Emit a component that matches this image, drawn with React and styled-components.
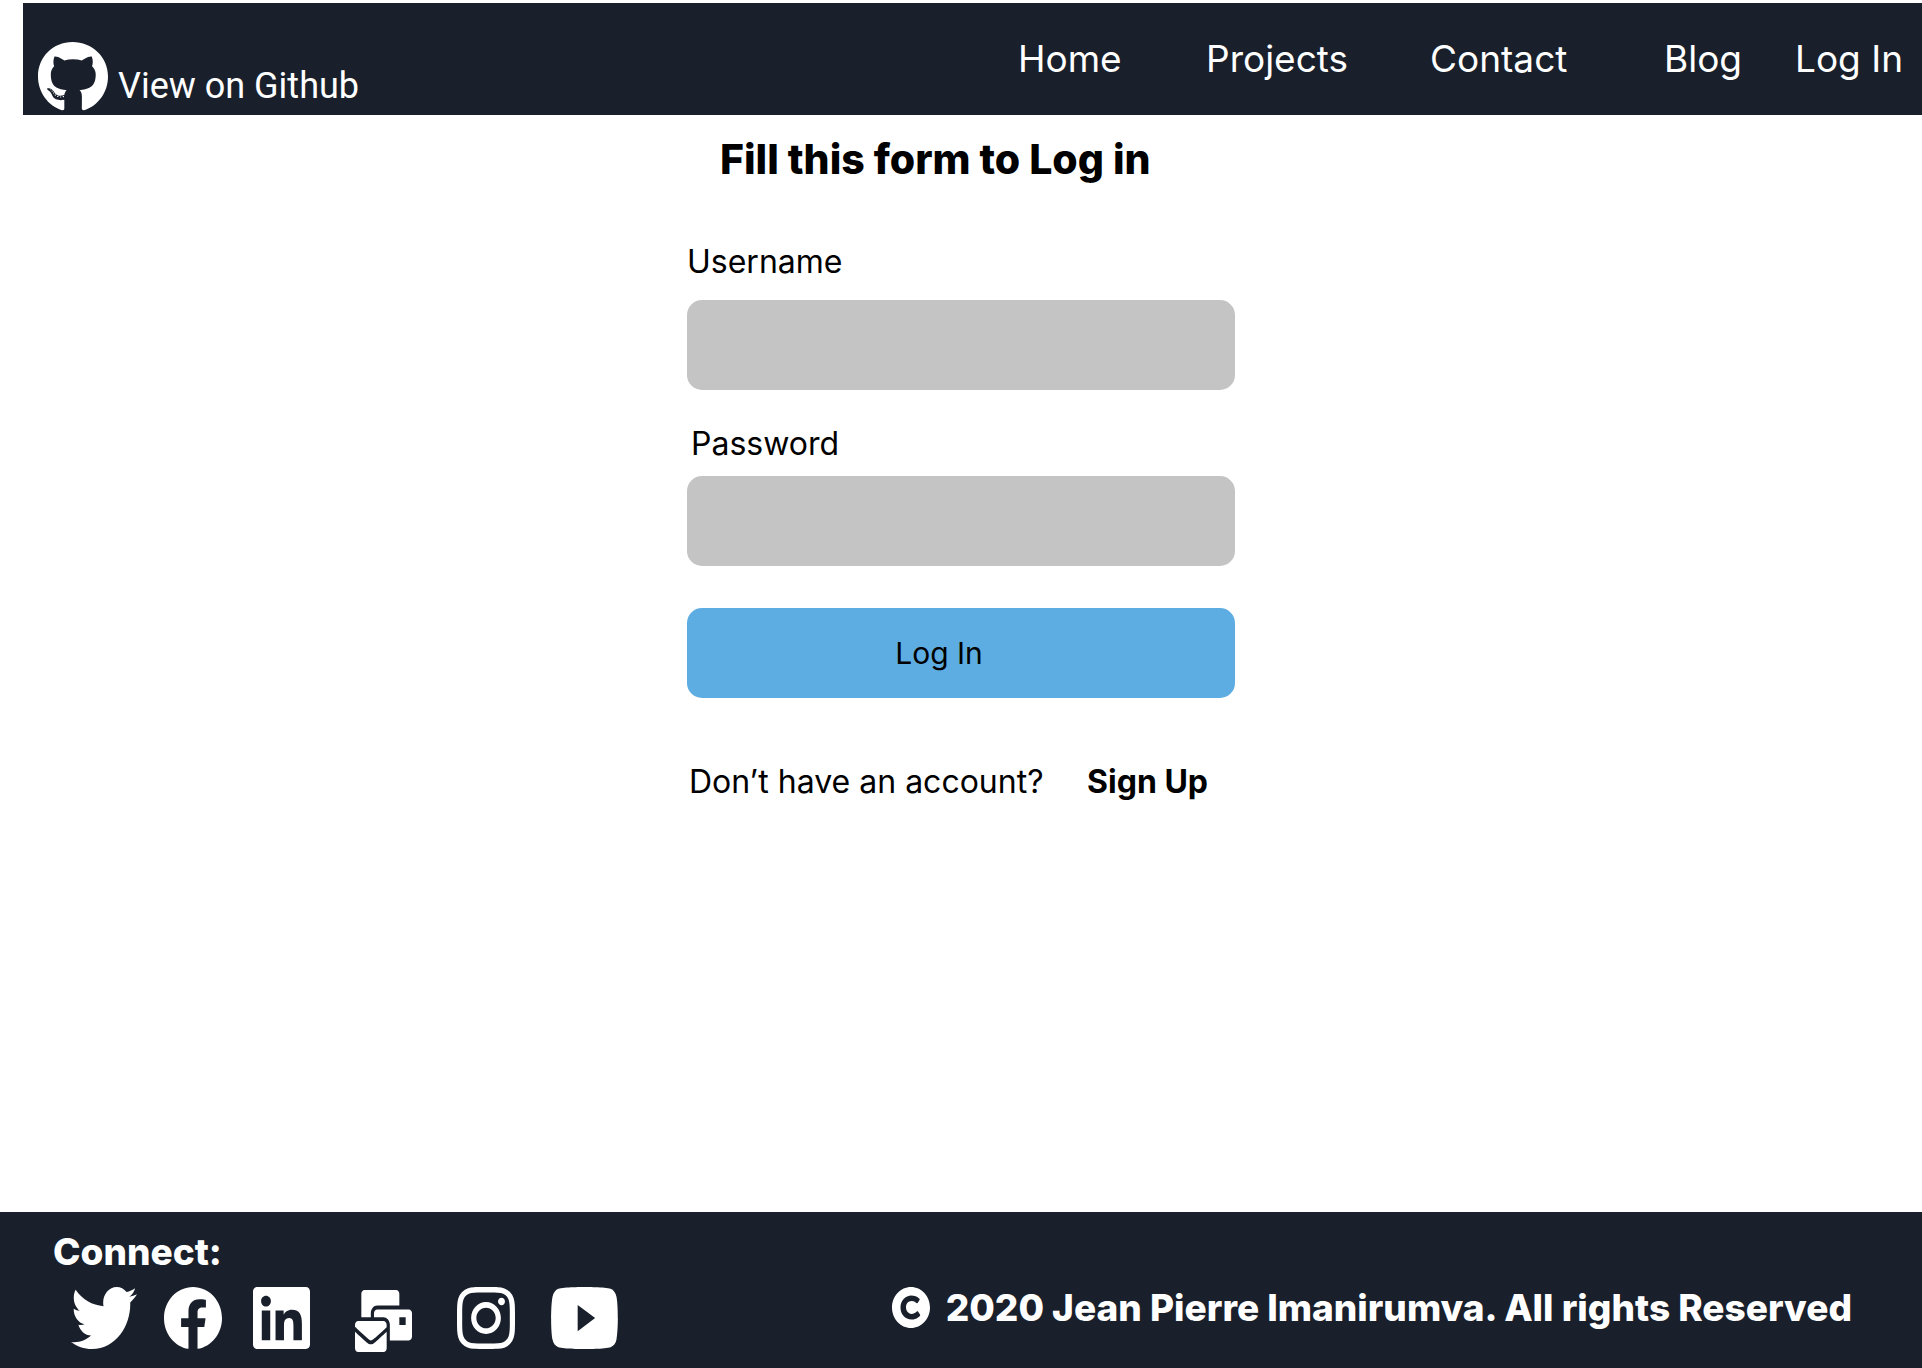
import React from "react";
import styled, { createGlobalStyle } from "styled-components";
import {
  FaCopyright,
  FaFacebook,
  FaGithub,
  FaInstagram,
  FaLinkedin,
  FaMailBulk,
  FaTwitter,
  FaYoutube,
} from "react-icons/fa";

const colors = {
  bar: "#19202b",
  field: "#c4c4c4",
  action: "#5dade2",
  text: "#000000",
  light: "#ffffff",
};

const GlobalStyle = createGlobalStyle`
  *, *::before, *::after { box-sizing: border-box; }
  body {
    margin: 0;
    background: ${colors.light};
    color: ${colors.text};
    font-family: Inter, "Liberation Sans", sans-serif;
  }
  a { color: inherit; text-decoration: none; }
`;

const Page = styled.div`
  display: flex;
  flex-direction: column;
  min-height: 100vh;
`;

const Header = styled.header`
  display: flex;
  justify-content: space-between;
  min-height: 112px;
  margin: 3px 0 0 23px;
  padding-left: 15px;
  background: ${colors.bar};
  color: ${colors.light};
`;

const GithubLink = styled.a`
  display: flex;
  align-items: flex-end;
  gap: 10px;
  padding-bottom: 3px;
  font-family: Roboto, "Liberation Sans", sans-serif;
  font-size: 36px;
  line-height: 52px;
  white-space: nowrap;
`;

const Nav = styled.nav`
  display: grid;
  grid-template-columns: 188px 224px 234px 131px 127px;
  align-items: center;
  font-size: 37px;
  line-height: 44px;
  white-space: nowrap;
`;

const Main = styled.main`
  flex: 1;
  display: flex;
  justify-content: center;
  padding: 20px 24px;
`;

const Form = styled.form`
  display: flex;
  flex-direction: column;
  width: 100%;
  max-width: 548px;
`;

const Title = styled.h1`
  margin: 0 0 59px;
  padding-left: 33px;
  font-size: 41px;
  font-weight: 800;
  line-height: 48px;
  white-space: nowrap;
`;

const Field = styled.div`
  display: flex;
  flex-direction: column;
  gap: ${({ $gap }) => $gap}px;
  margin-bottom: ${({ $after }) => $after}px;
`;

const Label = styled.label`
  padding-left: ${({ $inset }) => $inset || 0}px;
  font-size: 32px;
  line-height: 40px;
`;

const Input = styled.input`
  width: 100%;
  height: 90px;
  padding: 0 24px;
  border: 0;
  border-radius: 15px;
  background: ${colors.field};
  font: inherit;
  font-size: 30px;
`;

const Submit = styled.button`
  height: 90px;
  padding: 0 44px 0 0;
  border: 0;
  border-radius: 15px;
  background: ${colors.action};
  color: ${colors.text};
  font: inherit;
  font-size: 30px;
  cursor: pointer;
`;

const SignUpRow = styled.p`
  display: flex;
  justify-content: space-between;
  margin: 64px 0 0;
  padding: 0 27px 0 2px;
  font-size: 32px;
  line-height: 40px;
  white-space: nowrap;
`;

const SignUpLink = styled.a`
  font-weight: 700;
`;

const Footer = styled.footer`
  display: flex;
  justify-content: space-between;
  align-items: flex-end;
  padding: 18px 70px 16px 53px;
  background: ${colors.bar};
  color: ${colors.light};
`;

const ConnectTitle = styled.h2`
  margin: 0 0 13px;
  font-size: 37px;
  font-weight: 800;
  line-height: 44px;
`;

const SocialList = styled.ul`
  display: flex;
  align-items: flex-start;
  margin: 0;
  padding: 0;
  list-style: none;
`;

const SocialItem = styled.li`
  margin-left: ${({ $before }) => $before}px;
`;

const SocialLink = styled.a`
  display: block;
  svg { display: block; }
`;

const Copyright = styled.p`
  display: flex;
  align-items: center;
  gap: 16px;
  margin: 0 0 24px;
  font-size: 37px;
  font-weight: 800;
  line-height: 41px;
  white-space: nowrap;
`;

const links = ["Home", "Projects", "Contact", "Blog", "Log In"];

const socials = [
  { name: "Twitter", Icon: FaTwitter, box: "0 48 512 416", width: 66, height: 62, before: 18 },
  { name: "Facebook", Icon: FaFacebook, box: "8 8 496 494", width: 58, height: 62, before: 27 },
  { name: "LinkedIn", Icon: FaLinkedin, box: "0 32 448 448", width: 57, height: 62, before: 31 },
  { name: "Email", Icon: FaMailBulk, box: "0 -25 576 537", width: 57, height: 65, before: 45 },
  { name: "Instagram", Icon: FaInstagram, box: "0 32 448 448", width: 58, height: 62, before: 45 },
  { name: "YouTube", Icon: FaYoutube, box: "14 64 548 384", width: 67, height: 62, before: 36 },
];

export default function App() {
  return (
    <Page>
      <GlobalStyle />
      <Header>
        <GithubLink href="#github">
          <FaGithub viewBox="0 8 496 496" size={70} aria-hidden="true" />
          View on Github
        </GithubLink>
        <Nav aria-label="Main">
          {links.map((name) => (
            <a key={name} href={`#${name.toLowerCase().replace(" ", "-")}`}>
              {name}
            </a>
          ))}
        </Nav>
      </Header>
      <Main>
        <Form onSubmit={(event) => event.preventDefault()}>
          <Title>Fill this form to Log in</Title>
          <Field $gap={18} $after={34}>
            <Label htmlFor="username">Username</Label>
            <Input id="username" name="username" type="text" autoComplete="username" />
          </Field>
          <Field $gap={12} $after={42}>
            <Label htmlFor="password" $inset={4}>Password</Label>
            <Input id="password" name="password" type="password" autoComplete="current-password" />
          </Field>
          <Submit type="submit">Log In</Submit>
          <SignUpRow>
            <span>Don’t have an account?</span>
            <SignUpLink href="#sign-up">Sign Up</SignUpLink>
          </SignUpRow>
        </Form>
      </Main>
      <Footer>
        <section>
          <ConnectTitle>Connect:</ConnectTitle>
          <SocialList>
            {socials.map(({ name, Icon, box, width, height, before }) => (
              <SocialItem key={name} $before={before}>
                <SocialLink href={`#${name.toLowerCase()}`} aria-label={name}>
                  <Icon viewBox={box} preserveAspectRatio="none" style={{ width, height }} />
                </SocialLink>
              </SocialItem>
            ))}
          </SocialList>
        </section>
        <Copyright>
          <FaCopyright viewBox="8 8 496 496" preserveAspectRatio="none" style={{ width: 38, height: 41 }} aria-hidden="true" />
          <span>2020 Jean Pierre Imanirumva. All rights Reserved</span>
        </Copyright>
      </Footer>
    </Page>
  );
}
